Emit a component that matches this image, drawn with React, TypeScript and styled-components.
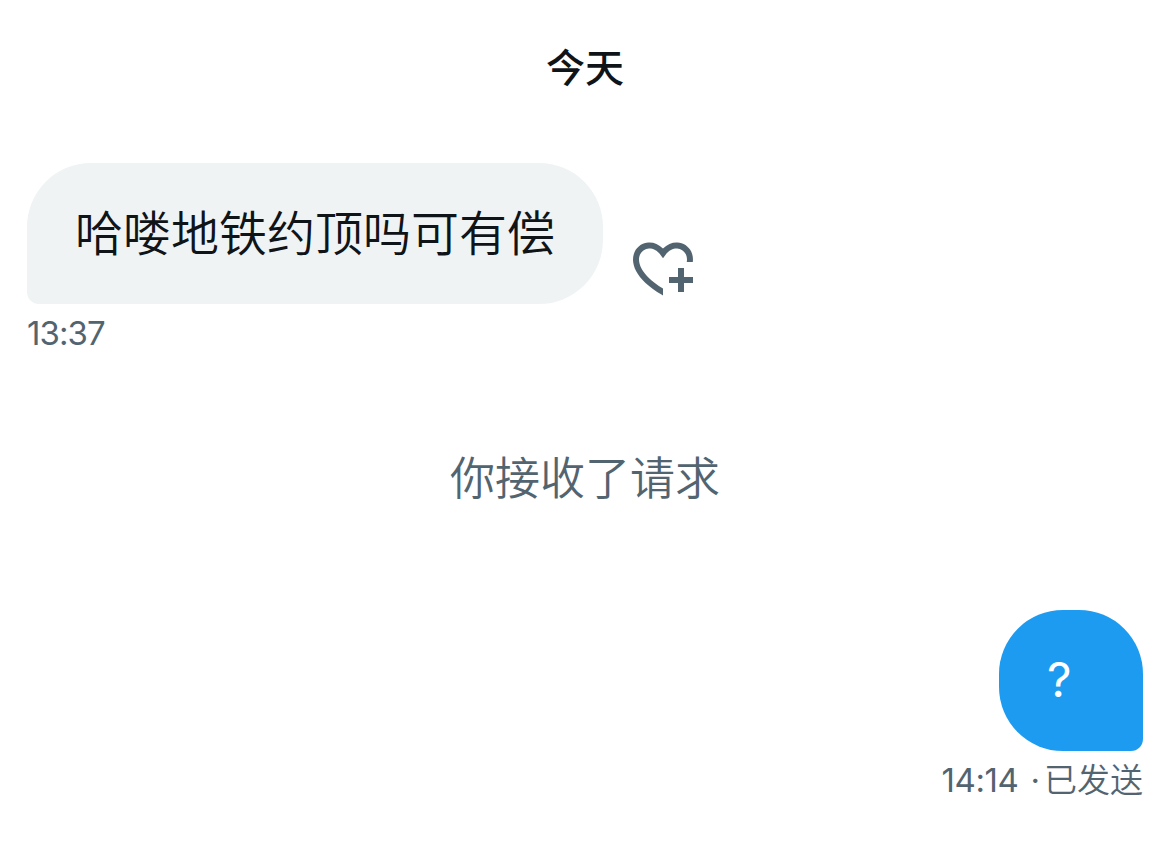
import React from "react";
import styled, { createGlobalStyle } from "styled-components";

const GlobalStyle = createGlobalStyle`
  body {
    margin: 0;
    background-color: #fff;
    font-family: Inter, "Noto Sans CJK SC", sans-serif;
  }
`;

const Conversation = styled.main`
  display: flex;
  flex-direction: column;
  box-sizing: border-box;
  height: 853px;
  padding: 40px 26px 0 27px;
  color: #0f1419;
`;

const DateTitle = styled.h2`
  margin: 0;
  height: 56px;
  line-height: 56px;
  font-size: 39px;
  font-weight: 500;
  text-align: center;
`;

const MessageGroup = styled.section<{ $sent?: boolean }>`
  display: flex;
  flex-direction: column;
  align-items: ${({ $sent }) => ($sent ? "flex-end" : "flex-start")};
  margin-top: ${({ $sent }) => ($sent ? "102px" : "67px")};
`;

const MessageRow = styled.div`
  display: flex;
  align-items: flex-end;
  gap: 24px;
`;

const Bubble = styled.div<{ $sent?: boolean }>`
  box-sizing: border-box;
  min-width: 144px;
  height: 141px;
  padding: 0 48px;
  border-radius: ${({ $sent }) =>
    $sent ? "64px 64px 12px 64px" : "64px 64px 64px 12px"};
  background-color: ${({ $sent }) => ($sent ? "#1d9bf0" : "#eff3f4")};
  color: ${({ $sent }) => ($sent ? "#fff" : "#0f1419")};
  font-size: 48px;
  font-weight: ${({ $sent }) => ($sent ? 400 : 350)};
  line-height: ${({ $sent }) => ($sent ? "139px" : "141px")};
  white-space: nowrap;
`;

const ReactionButton = styled.button`
  display: flex;
  padding: 0;
  border: 0;
  background: none;
  color: #536471;
`;

const Meta = styled.div`
  display: flex;
  height: 58px;
  line-height: 58px;
  font-size: 33px;
  color: #536471;
`;

const Time = styled.time<{ $sent?: boolean }>`
  letter-spacing: ${({ $sent }) => ($sent ? "-0.4px" : "-0.9px")};
`;

const Dot = styled.span`
  margin: 0 4px 0 12px;
`;

const Status = styled.span`
  font-weight: 350;
`;

const Notice = styled.p`
  margin: 88px 0 0;
  height: 58px;
  line-height: 58px;
  font-size: 45px;
  font-weight: 350;
  text-align: center;
  color: #536471;
`;

const HeartPlusIcon = () => (
  <svg width="72" height="72" viewBox="0 0 24 24" fill="currentColor">
    <path d="M17 12v3h-2.998v2h3v3h2v-3h3v-2h-3.001v-3H17zm-5 6.839c-3.871-2.34-6.053-4.639-7.127-6.609-1.112-2.04-1.031-3.7-.479-4.82.561-1.13 1.667-1.84 2.91-1.91 1.222-.06 2.68.51 3.892 2.16l.806 1.09.805-1.09c1.211-1.65 2.668-2.22 3.89-2.16 1.242.07 2.347.78 2.908 1.91.334.677.49 1.554.321 2.59h2.011c.153-1.283-.039-2.469-.539-3.48-.887-1.79-2.647-2.91-4.601-3.01-1.65-.09-3.367.56-4.796 2.01-1.43-1.45-3.147-2.1-4.798-2.01-1.954.1-3.714 1.22-4.601 3.01-.896 1.81-.846 4.17.514 6.67 1.353 2.48 4.003 5.12 8.382 7.67l.502.299v-2.32z" />
  </svg>
);

const App = () => {
  return (
    <>
      <GlobalStyle />
      <Conversation>
        <DateTitle>今天</DateTitle>
        <MessageGroup>
          <MessageRow>
            <Bubble>哈喽地铁约顶吗可有偿</Bubble>
            <ReactionButton aria-label="添加反应">
              <HeartPlusIcon />
            </ReactionButton>
          </MessageRow>
          <Meta>
            <Time>13:37</Time>
          </Meta>
        </MessageGroup>
        <Notice>你接收了请求</Notice>
        <MessageGroup $sent>
          <Bubble $sent>?</Bubble>
          <Meta>
            <Time $sent>14:14</Time>
            <Dot>·</Dot>
            <Status>已发送</Status>
          </Meta>
        </MessageGroup>
      </Conversation>
    </>
  );
};

export default App;
